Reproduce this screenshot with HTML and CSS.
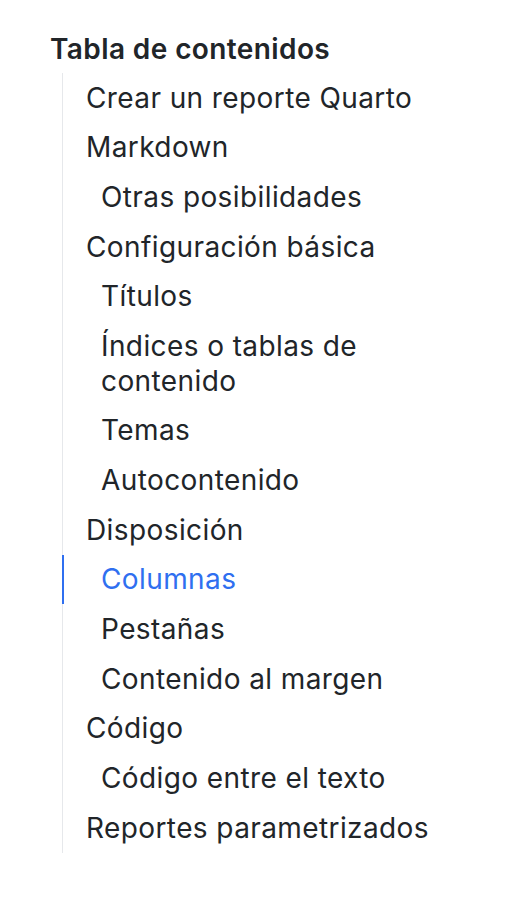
FILE: index.html
```html
<!DOCTYPE html>
<html lang="es">
<head>
<meta charset="utf-8">
<title>Tabla de contenidos</title>
<link rel="stylesheet" href="styles.css">
</head>
<body>
<nav class="toc">
  <h2 class="toc-title">Tabla de contenidos</h2>
  <ul class="toc-list">
    <li class="lvl1"><a href="#">Crear un reporte Quarto</a></li>
    <li class="lvl1"><a href="#">Markdown</a></li>
    <li class="lvl2"><a href="#">Otras posibilidades</a></li>
    <li class="lvl1"><a href="#">Configuración básica</a></li>
    <li class="lvl2"><a href="#">Títulos</a></li>
    <li class="lvl2"><a href="#">Índices o tablas de contenido</a></li>
    <li class="lvl2"><a href="#">Temas</a></li>
    <li class="lvl2"><a href="#">Autocontenido</a></li>
    <li class="lvl1"><a href="#">Disposición</a></li>
    <li class="lvl2 active"><a href="#">Columnas</a></li>
    <li class="lvl2"><a href="#">Pestañas</a></li>
    <li class="lvl2"><a href="#">Contenido al margen</a></li>
    <li class="lvl1"><a href="#">Código</a></li>
    <li class="lvl2"><a href="#">Código entre el texto</a></li>
    <li class="lvl1"><a href="#">Reportes parametrizados</a></li>
  </ul>
</nav>
</body>
</html>
```
FILE: styles.css
```css
html, body {
  margin: 0;
  padding: 0;
  background: #ffffff;
}
body {
  font-family: Inter, "Noto Sans", sans-serif;
  color: #212529;
}
.toc {
  padding: 32px 0 0 50px;
}
.toc-title {
  margin: 0;
  font-size: 28px;
  font-weight: 600;
  letter-spacing: 0.4px;
  line-height: 34px;
  height: 41px;
}
.toc-list {
  list-style: none;
  margin: 0 0 0 12px;
  padding: 0;
  width: 420px;
  border-left: 1px solid #e6e8eb;
}
.toc-list li {
  padding: 7.6px 0;
  line-height: 34.5px;
  font-size: 28px;
  letter-spacing: 0.4px;
}
.toc-list a {
  color: #212529;
  text-decoration: none;
  display: block;
}
.lvl1 { padding-left: 23px !important; }
.lvl2 { padding-left: 38px !important; }
.lvl2 a { width: 330px; }
.toc-list li.active {
  margin-left: -1px;
  border-left: 2px solid #2f6ff0;
  padding-left: 37px !important;
}
.toc-list li.active a {
  color: #2f6ff0;
}
```
